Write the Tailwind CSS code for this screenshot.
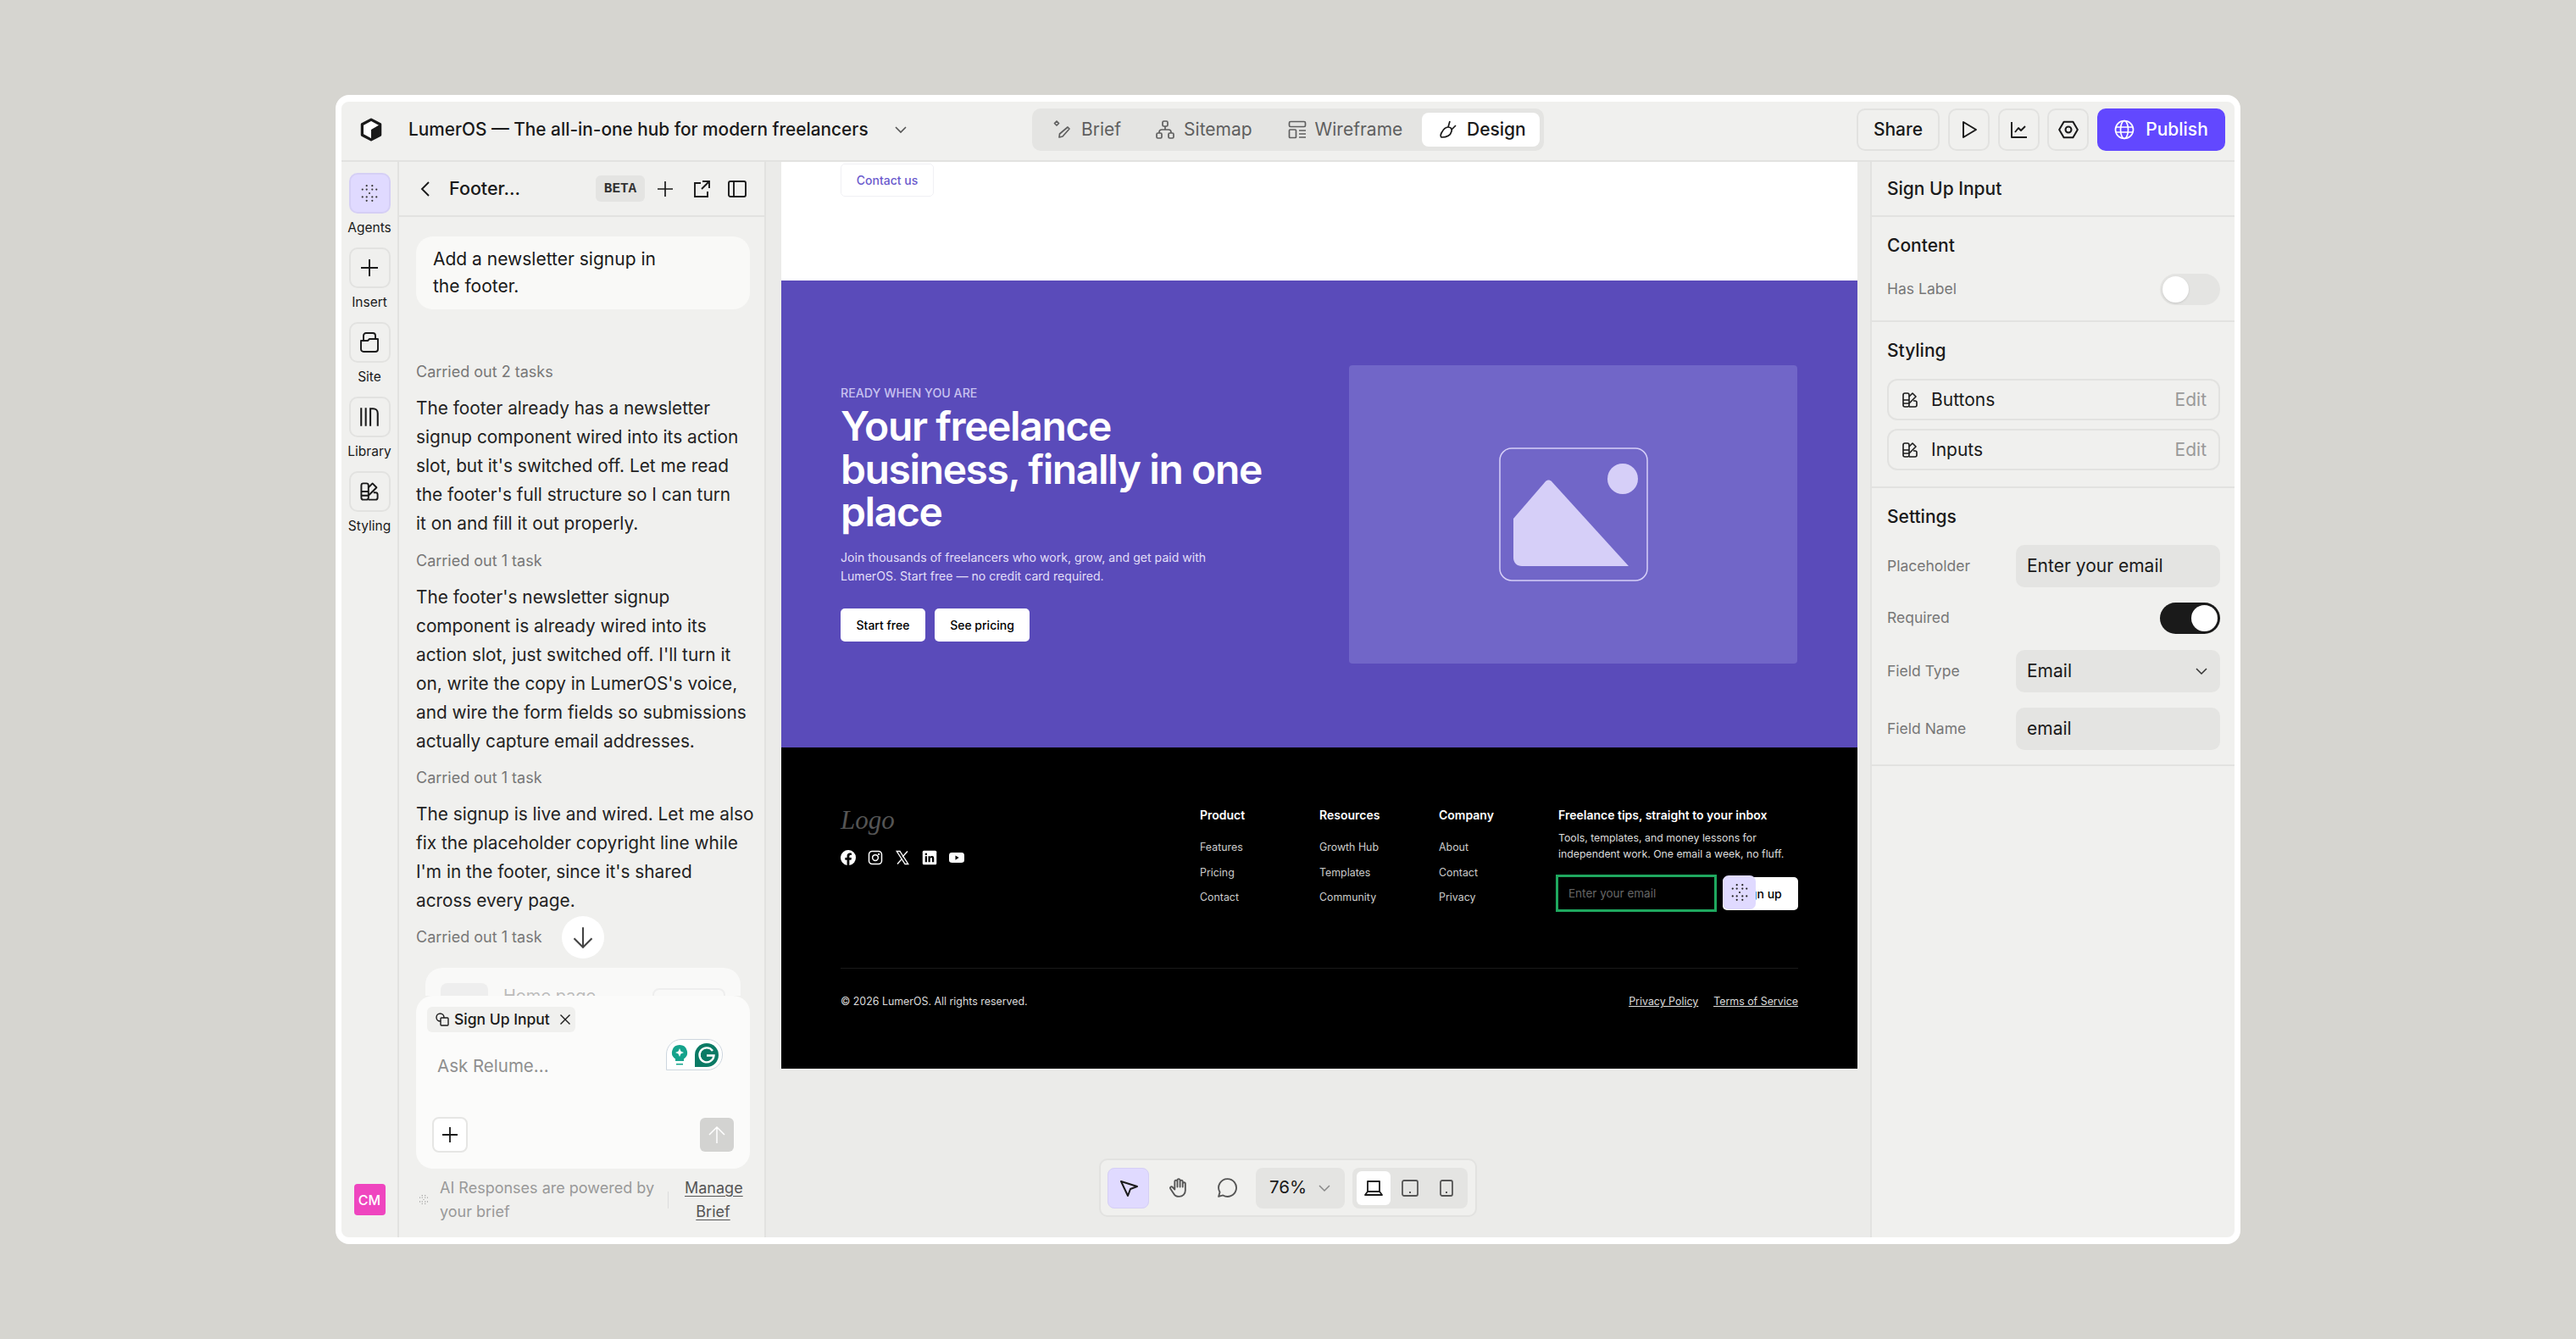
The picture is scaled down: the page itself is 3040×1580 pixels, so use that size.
<!DOCTYPE html>
<html lang="en"><head><meta charset="utf-8"><title>LumerOS</title>
<script src="https://cdn.jsdelivr.net/npm/@tailwindcss/browser@4"></script></head>
<body class="m-0 h-[1580px] w-[3040px] overflow-hidden bg-[#d6d5d0] font-[family-name:Inter,sans-serif] text-[#1a1a1a]">
<svg class="hidden"><defs>
<symbol id="dots" viewBox="0 0 20 20"><g fill="currentColor"><circle cx="7" cy="2" r="1"/><circle cx="13" cy="2" r="1"/><circle cx="2.5" cy="6" r="1"/><circle cx="7" cy="6" r="1"/><circle cx="13" cy="6" r="1"/><circle cx="17.5" cy="6" r="1"/><circle cx="10" cy="10" r="1"/><circle cx="2.5" cy="14" r="1"/><circle cx="7" cy="14" r="1"/><circle cx="13" cy="14" r="1"/><circle cx="17.5" cy="14" r="1"/><circle cx="7" cy="18" r="1"/><circle cx="13" cy="18" r="1"/></g></symbol>
<symbol id="pal" viewBox="0 0 20 20"><g fill="none" stroke="currentColor" stroke-width="1.6" stroke-linejoin="round"><path d="M2 4a2 2 0 0 1 2-2h3a2 2 0 0 1 2 2v12a2 2 0 0 1-2 2H4a2 2 0 0 1-2-2zM2 10h7M2 14h7"/><path d="M9 6l4-4 4 4-8 8M9 18h7a2 2 0 0 0 2-2v-3a2 2 0 0 0-2-2h-2"/></g></symbol>
</defs></svg>

<div class="absolute left-[396px] top-[112px] flex h-[1356px] w-[2248px] flex-col overflow-hidden rounded-[16px] border-x-[7px] border-y-[8px] border-white bg-[#f0f0ee]">
  <!-- top bar -->
  <header class="relative flex h-[71px] shrink-0 items-center border-b-2 border-[#e2e2e0] pb-[3px] pl-[20px] pr-[11px]">
    <svg class="h-[30px] w-[30px]" viewBox="0 0 24 24"><path d="M12 2.5 20.5 7v10L12 21.5 3.5 17V7z" fill="#fff" stroke="#1a1a1a" stroke-width="2.6" stroke-linejoin="round"/><path d="M12 12l8.5-5v10L12 21.5z" fill="#1a1a1a"/></svg>
    <span class="ml-[29px] text-[20.8px] font-[450]">LumerOS — The all-in-one hub for modern freelancers</span>
    <svg class="ml-[28px] h-[20px] w-[20px]" viewBox="0 0 20 20" fill="none" stroke="#555" stroke-width="1.6"><path d="M4 7l6 6 6-6"/></svg>

    <nav class="absolute left-[815px] top-[8px] flex h-[50px] w-[604px] items-center rounded-[10px] bg-[#e4e4e2] pl-[25px] pr-[5px] text-[21px] text-[#5f5f5f]">
      <span class="flex items-center gap-[11px]"><svg class="h-[22px] w-[22px]" viewBox="0 0 22 22" fill="none" stroke="currentColor" stroke-width="1.7" stroke-linejoin="round"><path d="M4 1l2.5 2.5L4 6 1.500 3.500z"/><path d="M17 8l2 2-8 9-4 1 .5-4z"/></svg>Brief</span>
      <span class="ml-[41px] flex items-center gap-[11px]"><svg class="h-[22px] w-[22px]" viewBox="0 0 22 22" fill="none" stroke="currentColor" stroke-width="1.7"><rect x="8" y="1" width="6" height="6" rx="1.500"/><rect x="1" y="15" width="6" height="6" rx="1.500"/><rect x="15" y="15" width="6" height="6" rx="1.500"/><path d="M11 7v4M4 15v-1a3 3 0 0 1 3-3h8a3 3 0 0 1 3 3v1"/></svg>Sitemap</span>
      <span class="ml-[42px] flex items-center gap-[10px]"><svg class="h-[22px] w-[22px]" viewBox="0 0 22 22" fill="none" stroke="currentColor" stroke-width="1.7"><rect x="1.500" y="1.500" width="19" height="6" rx="1.500"/><rect x="1.500" y="11" width="8" height="9.500" rx="1"/><path d="M13 12h8M13 16h8M13 20h8"/></svg>Wireframe</span>
      <span class="absolute left-[460px] top-[5px] flex h-[40px] w-[139px] items-center gap-[11px] rounded-[8px] bg-white pl-[20px] font-[450] text-[#1a1a1a]"><svg class="h-[22px] w-[22px]" viewBox="0 0 22 22" fill="none" stroke="currentColor" stroke-width="1.700" stroke-linejoin="round"><path d="M13 1l-2 7M20 6l-5 5"/><path d="M11 8c3 0 5 2 4 5-1 4-5 7-12 7-1-1-1-3 0-5 2-4 5-7 8-7z"/></svg>Design</span>
    </nav>

    <div class="ml-auto flex items-center">
      <button class="h-[50px] w-[98px] rounded-[10px] border-2 border-[#e2e2e0] text-[21px] font-[450]">Share</button>
      <button class="ml-[10px] flex h-[50px] w-[49px] items-center justify-center rounded-[10px] border-2 border-[#e2e2e0]"><svg class="h-[24px] w-[24px]" viewBox="0 0 24 24" fill="none" stroke="#1a1a1a" stroke-width="2" stroke-linejoin="round"><path d="M5 3v18l15-9z"/></svg></button>
      <button class="ml-[10px] flex h-[50px] w-[49px] items-center justify-center rounded-[10px] border-2 border-[#e2e2e0]"><svg class="h-[24px] w-[24px]" viewBox="0 0 24 24" fill="none" stroke="#1a1a1a" stroke-width="1.900" stroke-linejoin="round"><path d="M3 3v18h18M7 15l4-5 3 3 5-5"/></svg></button>
      <button class="ml-[9px] flex h-[50px] w-[49px] items-center justify-center rounded-[10px] border-2 border-[#e2e2e0]"><svg class="h-[26px] w-[26px]" viewBox="0 0 24 24" fill="none" stroke="#1a1a1a" stroke-width="1.900" stroke-linejoin="round"><path d="M7 3.500h10L22 12l-5 8.500H7L2 12z"/><circle cx="12" cy="12" r="3.200"/></svg></button>
      <button class="ml-[10px] flex h-[50px] w-[151px] items-center justify-center gap-[13px] rounded-[10px] bg-[#6248ff] text-[21px] font-[450] text-white"><svg class="h-[24px] w-[24px]" viewBox="0 0 24 24" fill="none" stroke="#fff" stroke-width="1.700"><circle cx="12" cy="12" r="10.500"/><ellipse cx="12" cy="12" rx="4.500" ry="10.500"/><path d="M2 9h20M2 15h20"/></svg>Publish</button>
    </div>
  </header>

  <div class="flex min-h-0 flex-1">
    <!-- rail -->
    <aside class="flex w-[68px] shrink-0 flex-col items-center border-r-2 border-[#e2e2e0] pt-[13px] text-[15.5px]">
      <div class="flex h-[48px] w-[49px] items-center justify-center rounded-[10px] border-2 border-[#d5cff5] bg-[#e0daff] text-[#3a3a3a]"><svg class="h-[22px] w-[22px]"><use href="#dots"/></svg></div>
      <span class="mt-[7px] h-[33px] leading-[19px]">Agents</span>
      <div class="flex h-[48px] w-[49px] items-center justify-center rounded-[10px] border-2 border-[#e2e2e0]"><svg class="h-[24px] w-[24px]" viewBox="0 0 24 24" fill="none" stroke="#1a1a1a" stroke-width="1.900"><path d="M12 2v20M2 12h20"/></svg></div>
      <span class="mt-[7px] h-[33px] leading-[19px]">Insert</span>
      <div class="flex h-[48px] w-[49px] items-center justify-center rounded-[10px] border-2 border-[#e2e2e0]"><svg class="h-[26px] w-[24px]" viewBox="0 0 24 26" fill="none" stroke="#1a1a1a" stroke-width="1.900" stroke-linejoin="round"><path d="M5 11V5a3 3 0 0 1 3-3h8a3 3 0 0 1 3 3v4"/><path d="M2 11h8l2-2h10v12a3 3 0 0 1-3 3H5a3 3 0 0 1-3-3z"/></svg></div>
      <span class="mt-[7px] h-[33px] leading-[19px]">Site</span>
      <div class="flex h-[48px] w-[49px] items-center justify-center rounded-[10px] border-2 border-[#e2e2e0]"><svg class="h-[26px] w-[26px]" viewBox="0 0 24 24" fill="none" stroke="#1a1a1a" stroke-width="1.900"><path d="M3 2v20M8 2v20M13 22V3h3c3 0 5 2 5 5v14"/></svg></div>
      <span class="mt-[7px] h-[33px] leading-[19px]">Library</span>
      <div class="flex h-[48px] w-[49px] items-center justify-center rounded-[10px] border-2 border-[#e2e2e0]"><svg class="h-[24px] w-[24px]"><use href="#pal"/></svg></div>
      <span class="mt-[7px] leading-[19px]">Styling</span>
      <div class="mb-[26px] mt-auto flex h-[37px] w-[37px] items-center justify-center rounded-[4px] bg-[#ef45bf] text-[16px] font-medium text-white">CM</div>
    </aside>

    <!-- chat -->
    <section class="flex w-[433px] shrink-0 flex-col border-r-2 border-[#e2e2e0]">
      <div class="flex h-[65px] shrink-0 items-center border-b-2 border-[#e2e2e0] pl-[24px] pr-[21px]">
        <svg class="h-[22px] w-[14px]" viewBox="0 0 14 22" fill="none" stroke="#1a1a1a" stroke-width="1.900"><path d="M11 3l-8 8 8 8"/></svg>
        <span class="ml-[21px] text-[21.5px] font-[450]">Footer...</span>
        <span class="ml-auto flex h-[31px] w-[58px] items-center justify-center rounded-[6px] bg-[#e4e4e2] font-[family-name:'Liberation_Mono',monospace] text-[16px] font-bold text-[#333]">BETA</span>
        <svg class="ml-[13px] h-[22px] w-[22px]" viewBox="0 0 22 22" fill="none" stroke="#1a1a1a" stroke-width="1.700"><path d="M11 2v18M2 11h18"/></svg>
        <svg class="ml-[21px] h-[22px] w-[22px]" viewBox="0 0 22 22" fill="none" stroke="#1a1a1a" stroke-width="1.900"><path d="M10 4H3v16h15v-6M12 2h8v8M20 2l-9 9"/></svg>
        <svg class="ml-[20px] h-[22px] w-[22px]" viewBox="0 0 22 22" fill="none" stroke="#1a1a1a" stroke-width="1.900"><rect x="1" y="2" width="20" height="18" rx="2"/><path d="M7 2v18"/></svg>
      </div>
      <div class="relative min-h-0 flex-1 overflow-hidden pl-[20px] pr-[17px] pt-[23px]">
        <div class="flex h-[86px] items-center rounded-[20px] bg-[#f9f9f7] px-[20px] text-[21px] leading-[32px]"><p>Add a newsletter signup in<br>the footer.</p></div>
        <p class="mt-[60px] h-[40px] text-[18px] leading-[28px] text-[#777]">Carried out 2 tasks</p>
        <p class="h-[183px] whitespace-nowrap text-[20.800px] leading-[34px] text-[#222]">The footer already has a newsletter<br>signup component wired into its action<br>slot, but it's switched off. Let me read<br>the footer's full structure so I can turn<br>it on and fill it out properly.</p>
        <p class="h-[40px] text-[18px] leading-[28px] text-[#777]">Carried out 1 task</p>
        <p class="h-[216px] whitespace-nowrap text-[20.800px] leading-[34px] text-[#222]">The footer's newsletter signup<br>component is already wired into its<br>action slot, just switched off. I'll turn it<br>on, write the copy in LumerOS's voice,<br>and wire the form fields so submissions<br>actually capture email addresses.</p>
        <p class="h-[40px] text-[18px] leading-[28px] text-[#777]">Carried out 1 task</p>
        <p class="h-[148px] whitespace-nowrap text-[20.800px] leading-[34px] text-[#222]">The signup is live and wired. Let me also<br>fix the placeholder copyright line while<br>I'm in the footer, since it's shared<br>across every page.</p>
        <p class="text-[18px] leading-[28px] text-[#777]">Carried out 1 task</p>
        <div class="absolute left-[31px] top-[886px] flex h-[80px] w-[372px] items-start rounded-[20px] bg-white px-[18px] pt-[18px] opacity-60">
          <span class="h-[40px] w-[56px] rounded-[8px] bg-[#eee]"></span>
          <span class="ml-[18px] text-[20px] text-[#999]">Home page</span>
          <span class="ml-auto mt-[6px] h-[40px] w-[86px] rounded-[8px] border-2 border-[#eee]"></span>
        </div>
        <span class="absolute left-[192px] top-[825px] flex h-[50px] w-[50px] items-center justify-center rounded-full bg-white"><svg class="h-[28px] w-[28px]" viewBox="0 0 24 24" fill="none" stroke="#444" stroke-width="1.800"><path d="M12 2v20M3 13l9 9 9-9"/></svg></span>
      </div>
      <div class="relative z-10 ml-[20px] mr-[17px] h-[204px] shrink-0 rounded-[20px] bg-[#fbfbfa]">
        <div class="absolute left-[13px] top-[13px] flex h-[30px] w-[175px] items-center gap-[6px] rounded-[6px] bg-[#f0f0ee] pl-[10px] text-[17.500px] font-medium leading-none">
          <svg class="h-[16px] w-[16px] shrink-0" viewBox="0 0 16 16" fill="none" stroke="#1a1a1a" stroke-width="1.400"><circle cx="5.500" cy="5.500" r="4.500"/><rect x="6" y="6" width="9" height="9" rx="1" fill="#f0f0ee"/></svg>
          <span class="whitespace-nowrap">Sign Up Input</span>
          <svg class="ml-[5px] h-[14px] w-[14px] shrink-0" viewBox="0 0 14 14" fill="none" stroke="#1a1a1a" stroke-width="1.400"><path d="M1.500 1.500l11 11M12.500 1.500l-11 11"/></svg>
        </div>
        <span class="absolute left-[25px] top-[69px] text-[20.500px] leading-[28px] text-[#8f8f8f]">Ask Relume...</span>
        <div class="absolute left-[295px] top-[51px] flex h-[37px] w-[67px] items-center justify-center gap-[8px] rounded-bl-none rounded-br-[18px] rounded-tl-[18px] rounded-tr-[18px] border border-[#cdd6de] bg-white">
          <svg class="h-[26px] w-[20px]" viewBox="0 0 20 26"><path d="M10 1a9 9 0 0 0-5 16.500V20h10v-2.500A9 9 0 0 0 10 1z" fill="#15a38c"/><path d="M6 23h8v1.500H6z" fill="#15a38c"/><path d="M10 5l1.500 3.500L15 10l-3.500 1.500L10 15l-1.500-3.500L5 10l3.500-1.500z" fill="#fff"/></svg>
          <svg class="h-[28px] w-[28px]" viewBox="0 0 28 28"><path d="M14 0a14 14 0 1 1 0 28H0V14A14 14 0 0 1 14 0z" fill="#0b7a65"/><path d="M21 9a8.500 8.500 0 1 0 1.500 5.500H14" fill="none" stroke="#fff" stroke-width="2.400"/></svg>
        </div>
        <button class="absolute left-[19px] top-[143px] flex h-[42px] w-[42px] items-center justify-center rounded-[8px] border-2 border-[#e6e6e4] bg-white"><svg class="h-[22px] w-[22px]" viewBox="0 0 22 22" fill="none" stroke="#1a1a1a" stroke-width="1.800"><path d="M11 2v18M2 11h18"/></svg></button>
        <button class="absolute left-[335px] top-[144px] flex h-[40px] w-[40px] items-center justify-center rounded-[6px] bg-[#d3d3d1]"><svg class="h-[24px] w-[24px]" viewBox="0 0 24 24" fill="none" stroke="#fff" stroke-width="1.500"><path d="M12 22V3M3 12l9-9 9 9"/></svg></button>
      </div>
      <div class="relative h-[81px] shrink-0 pl-[48px] pt-[9px] text-[18px] leading-[28px] text-[#999]">
        <svg class="absolute left-[23px] top-[27px] h-[19px] w-[12px] text-[#888]"><use href="#dots"/></svg>
        <div class="flex items-center">
          <p class="w-[258px]">AI Responses are powered by your brief</p>
          <span class="ml-[11px] h-[20px] w-px shrink-0 bg-[#ddd]"></span>
          <a class="ml-[19px] w-[67px] text-center text-[#555] underline underline-offset-3">Manage Brief</a>
        </div>
      </div>
    </section>

    <!-- canvas -->
    <main class="relative min-w-0 flex-1 bg-[#ebebe9] pl-[18px] pr-[15px]">
      <div class="overflow-hidden">
        <div class="h-[140px] bg-white px-[70px] pt-[2px]">
          <a class="flex h-[39px] w-[110px] items-center justify-center rounded-[5px] border border-[#f0f0f4] text-[14px] font-medium text-[#6a5acd]">Contact us</a>
        </div>
        <section class="flex h-[551px] items-center justify-between bg-[#5a4bba] pl-[70px] pr-[71px]">
          <div class="w-[529px]">
            <p class="text-[14.200px] font-medium leading-[16px] text-[#c8c2f0]">READY WHEN YOU ARE</p>
            <h1 class="mt-[6px] text-[48px] font-semibold leading-[50.500px] tracking-[-1.400px] text-white">Your freelance business, finally in one place</h1>
            <p class="mt-[17.500px] w-[440px] text-[14.100px] leading-[21.500px] text-[#e2dff8]">Join thousands of freelancers who work, grow, and get paid with LumerOS. Start free — no credit card required.</p>
            <div class="mt-[28px] flex gap-[11px]">
              <a class="flex h-[39px] w-[100px] items-center justify-center rounded-[5px] bg-white text-[14px] font-medium text-black">Start free</a>
              <a class="flex h-[39px] w-[112px] items-center justify-center rounded-[5px] bg-white text-[14px] font-medium text-black">See pricing</a>
            </div>
          </div>
          <div class="flex h-[352px] w-[529px] items-center justify-center rounded-[4px] bg-[#7166c8]">
            <svg class="h-[158px] w-[176px]" viewBox="0 0 176 158" fill="none"><rect x="1" y="1" width="174" height="156" rx="14" stroke="#d6cff8" stroke-width="1.500"/><circle cx="146" cy="37" r="18" fill="#d6cff8"/><path d="M17 84l38-44c2-2 5-2 7 0l91 100H27c-6 0-10-4-10-10z" fill="#d6cff8"/></svg>
          </div>
        </section>
        <footer class="h-[379px] bg-black px-[70px] pt-[70px] text-white">
          <div class="flex h-[191px] border-b border-[#1a1a1a]">
            <div class="w-[424px]">
              <p class="font-[family-name:'Liberation_Serif',serif] text-[31px] italic leading-[32px] text-[#555]">Logo</p>
              <div class="mt-[19px] flex items-center gap-[14px]">
                <svg class="h-[18px] w-[18px]" viewBox="0 0 24 24" fill="#fff"><path d="M24 12a12 12 0 1 0-13.900 11.900v-8.400H7.100V12h3V9.400c0-3 1.800-4.700 4.500-4.700 1.300 0 2.700.2 2.700.2v3h-1.500c-1.500 0-2 .9-2 1.900V12h3.400l-.5 3.500h-2.900v8.400A12 12 0 0 0 24 12z"/></svg>
                <svg class="h-[18px] w-[18px]" viewBox="0 0 24 24" fill="none" stroke="#fff" stroke-width="2"><rect x="2" y="2" width="20" height="20" rx="5"/><circle cx="12" cy="12" r="4.500"/><circle cx="17.500" cy="6.500" r=".6" fill="#fff"/></svg>
                <svg class="h-[18px] w-[18px]" viewBox="0 0 24 24" fill="none" stroke="#fff" stroke-width="1.800"><path d="M3 2h5l13 20h-5zM20 2l-8 9M4 22l7.500-8.500"/></svg>
                <svg class="h-[18px] w-[18px]" viewBox="0 0 24 24"><rect x="1" y="1" width="22" height="22" rx="2" fill="#fff"/><path d="M5 9.500h3V19H5zM5 5h3v3H5zM10 9.500h3V11c1-2 6-3 6 2v6h-3v-5c0-3-3-2.500-3 0v5h-3z" fill="#000"/></svg>
                <svg class="h-[18px] w-[18px]" viewBox="0 0 24 24"><rect x="0" y="4" width="24" height="16" rx="4.500" fill="#fff"/><path d="M10 8.500v7l5.500-3.500z" fill="#000"/></svg>
              </div>
            </div>
            <div class="w-[141px] text-[12.400px] leading-[19px] text-[#ccc]"><p class="mb-[19px] text-[14px] font-semibold text-white">Product</p><p class="mb-[10.500px]">Features</p><p class="mb-[10.500px]">Pricing</p><p>Contact</p></div>
            <div class="w-[141px] text-[12.400px] leading-[19px] text-[#ccc]"><p class="mb-[19px] text-[14px] font-semibold text-white">Resources</p><p class="mb-[10.500px]">Growth Hub</p><p class="mb-[10.500px]">Templates</p><p>Community</p></div>
            <div class="w-[141px] text-[12.400px] leading-[19px] text-[#ccc]"><p class="mb-[19px] text-[14px] font-semibold text-white">Company</p><p class="mb-[10.500px]">About</p><p class="mb-[10.500px]">Contact</p><p>Privacy</p></div>
            <div class="relative flex-1">
              <p class="mb-[8px] text-[14px] font-semibold leading-[19px]">Freelance tips, straight to your inbox</p>
              <p class="text-[12.300px] leading-[19px] text-[#ddd]">Tools, templates, and money lessons for independent work. One email a week, no fluff.</p>
              <div class="mt-[15px] flex items-center">
                <div class="-ml-[3px] flex h-[44px] w-[190px] items-center border-[3px] border-[#1fa85f] pl-[12px] text-[13.500px] text-[#666]">Enter your email</div>
                <button class="ml-[7px] h-[39px] flex-1 rounded-[5px] bg-white text-[14px] font-medium text-black">Sign up</button>
              </div>
              <span class="absolute left-[194px] top-[81px] flex h-[40px] w-[39px] items-center justify-center rounded-[7px] bg-[#e0daff] text-[#222]"><svg class="h-[22px] w-[22px]"><use href="#dots"/></svg></span>
            </div>
          </div>
          <div class="flex items-center justify-between pt-[30px] text-[12.400px] leading-[18px] text-[#ddd]">
            <span>© 2026 LumerOS. All rights reserved.</span>
            <span class="flex gap-[18px] underline"><a>Privacy Policy</a><a>Terms of Service</a></span>
          </div>
        </footer>
      </div>

      <div class="absolute left-[393px] top-[1176px] flex h-[69px] w-[446px] items-center rounded-[10px] border-2 border-[#e2e2e0] bg-[#f0f0ee] pl-[8px]">
        <span class="flex h-[48px] w-[49px] items-center justify-center rounded-[8px] border border-[#d5cff5] bg-[#e0daff]"><svg class="h-[24px] w-[24px]" viewBox="0 0 24 24" fill="none" stroke="#1a1a1a" stroke-width="2" stroke-linejoin="round"><path d="M3 4l19 6-8 3-3 8z"/></svg></span>
        <svg class="ml-[22px] h-[25px] w-[25px]" viewBox="0 0 24 24" fill="none" stroke="#555" stroke-width="1.800" stroke-linejoin="round"><path d="M8 12V5a1.500 1.500 0 0 1 3 0v6V3.500a1.500 1.500 0 0 1 3 0V11V5a1.500 1.500 0 0 1 3 0v6V7.500a1.500 1.500 0 0 1 3 0V15c0 4-3 7-7 7-3 0-5-1-6-3l-4-6c-.8-1.500 1.200-3 2.500-1.700L8 14z"/></svg>
        <svg class="ml-[33px] h-[25px] w-[25px]" viewBox="0 0 24 24" fill="none" stroke="#555" stroke-width="1.800" stroke-linejoin="round"><path d="M12 2a10 10 0 1 1-5 18.600L2 22l1.400-5A10 10 0 0 1 12 2z"/></svg>
        <span class="ml-[21px] flex h-[48px] w-[105px] items-center rounded-[8px] bg-[#e4e4e2] pl-[16px] text-[20.500px]">76%<svg class="ml-[12px] h-[18px] w-[18px]" viewBox="0 0 18 18" fill="none" stroke="#888" stroke-width="1.500"><path d="M3 6l6 6 6-6"/></svg></span>
        <span class="ml-[9px] flex h-[48px] w-[136px] items-center rounded-[8px] bg-[#e4e4e2] pl-[5px]">
          <span class="flex h-[40px] w-[40px] items-center justify-center rounded-[6px] bg-white"><svg class="h-[22px] w-[22px]" viewBox="0 0 22 22" fill="none" stroke="#1a1a1a" stroke-width="1.800" stroke-linejoin="round"><path d="M4 3h14v12H4zM4 15l-3 4h20l-3-4"/></svg></span>
          <svg class="ml-[12px] h-[22px] w-[22px]" viewBox="0 0 22 22" fill="none" stroke="#555" stroke-width="1.800"><rect x="2" y="2" width="18" height="18" rx="2"/><path d="M10 16h2"/></svg>
          <svg class="ml-[21px] h-[22px] w-[22px]" viewBox="0 0 22 22" fill="none" stroke="#555" stroke-width="1.800"><rect x="4" y="2" width="14" height="18" rx="2"/><path d="M10 16h2"/></svg>
        </span>
      </div>
    </main>

    <!-- inspector -->
    <aside class="w-[430px] shrink-0 border-l-2 border-[#e2e2e0] text-[21px]">
      <div class="flex h-[65px] items-center border-b-2 border-[#e2e2e0] pl-[18px] pr-[17px] font-[450]">Sign Up Input</div>
      <div class="h-[124px] border-b-2 border-[#e2e2e0] pl-[18px] pr-[17px]">
        <p class="flex h-[67px] items-center font-[450]">Content</p>
        <div class="flex items-center justify-between text-[17.500px] text-[#777]">Has Label<span class="flex h-[37px] w-[71px] items-center rounded-full bg-[#e4e4e2] pl-[3px]"><span class="h-[31px] w-[31px] rounded-full bg-white shadow-sm"></span></span></div>
      </div>
      <div class="h-[196px] border-b-2 border-[#e2e2e0] pl-[18px] pr-[17px]">
        <p class="flex h-[67px] items-center font-[450]">Styling</p>
        <div class="flex h-[49px] items-center rounded-[12px] border-2 border-[#e2e2e0] pl-[15px] pr-[14px]"><svg class="h-[20px] w-[20px]"><use href="#pal"/></svg><span class="ml-[15px]">Buttons</span><span class="ml-auto text-[#999]">Edit</span></div>
        <div class="mt-[10px] flex h-[49px] items-center rounded-[12px] border-2 border-[#e2e2e0] pl-[15px] pr-[14px]"><svg class="h-[20px] w-[20px]"><use href="#pal"/></svg><span class="ml-[15px]">Inputs</span><span class="ml-auto text-[#999]">Edit</span></div>
      </div>
      <div class="h-[328px] border-b-2 border-[#e2e2e0] pl-[18px] pr-[17px]">
        <p class="flex h-[67px] items-center font-[450]">Settings</p>
        <div class="flex h-[50px] items-center justify-between text-[17.500px] text-[#777]">Placeholder<span class="flex h-[50px] w-[241px] items-center rounded-[10px] bg-[#e4e4e2] pl-[13px] text-[21px] text-[#1a1a1a]">Enter your email</span></div>
        <div class="mt-[18px] flex h-[37px] items-center justify-between text-[17.500px] text-[#777]">Required<span class="flex h-[37px] w-[71px] items-center justify-end rounded-full bg-[#1a1a1a] pr-[3px]"><span class="h-[31px] w-[31px] rounded-full bg-white"></span></span></div>
        <div class="mt-[19px] flex h-[50px] items-center justify-between text-[17.500px] text-[#777]">Field Type<span class="flex h-[50px] w-[241px] items-center rounded-[10px] bg-[#e4e4e2] pl-[13px] pr-[13px] text-[21px] text-[#1a1a1a]">Email<svg class="ml-auto h-[18px] w-[18px]" viewBox="0 0 18 18" fill="none" stroke="#333" stroke-width="1.500"><path d="M3 6l6 6 6-6"/></svg></span></div>
        <div class="mt-[18px] flex h-[50px] items-center justify-between text-[17.500px] text-[#777]">Field Name<span class="flex h-[50px] w-[241px] items-center rounded-[10px] bg-[#e4e4e2] pl-[13px] text-[21px] text-[#1a1a1a]">email</span></div>
      </div>
    </aside>
  </div>
</div>
</body></html>
